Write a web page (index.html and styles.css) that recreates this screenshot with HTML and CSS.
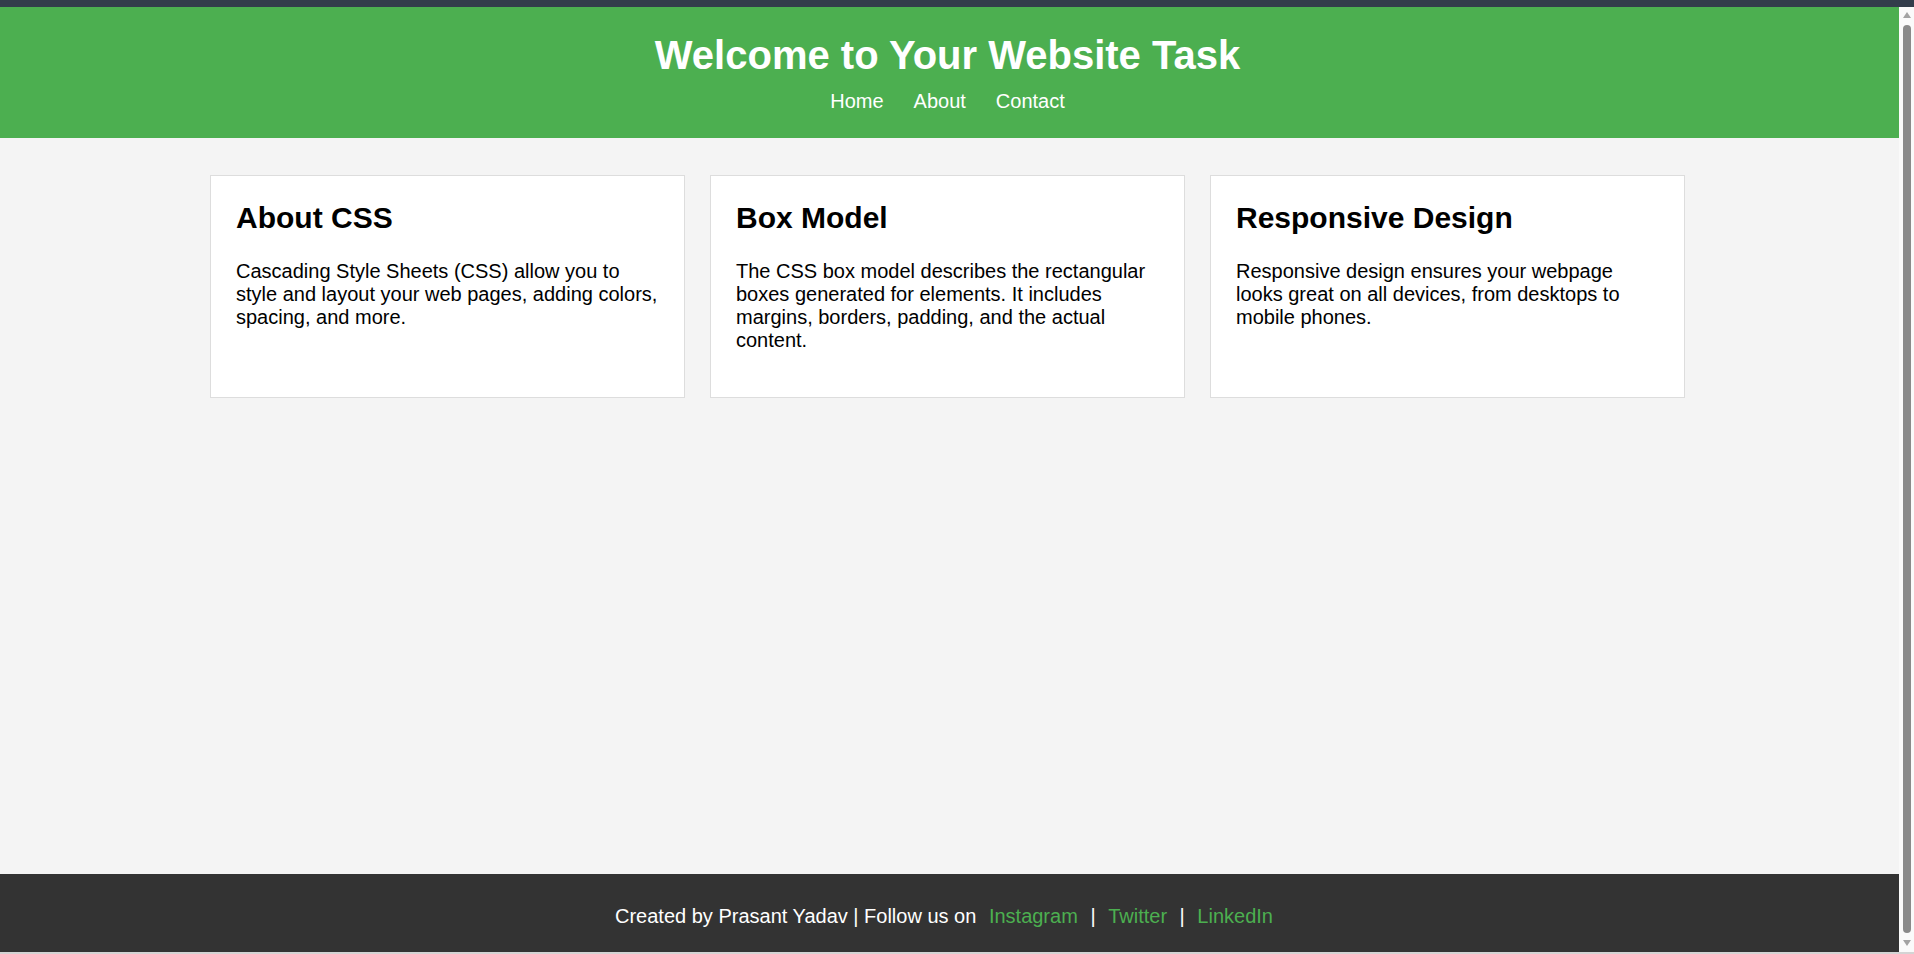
FILE: index.html
```html
<!DOCTYPE html>
<html lang="en">
<head>
<meta charset="UTF-8">
<title>Welcome to Your Website Task</title>
<link rel="stylesheet" href="styles.css">
</head>
<body>
<div class="topbar"></div>
<div class="window">
  <div class="page">
    <header class="site-header">
      <h1 class="site-title">Welcome to Your Website Task</h1>
      <nav class="site-nav">
        <a href="#" class="nav-link">Home</a><a href="#" class="nav-link">About</a><a href="#" class="nav-link">Contact</a>
      </nav>
    </header>
    <main class="main">
      <section class="cards">
        <article class="card">
          <h2 class="card-title">About CSS</h2>
          <p class="card-text">Cascading Style Sheets (CSS) allow you to style and layout your web pages, adding colors, spacing, and more.</p>
        </article>
        <article class="card">
          <h2 class="card-title">Box Model</h2>
          <p class="card-text">The CSS box model describes the rectangular boxes generated for elements. It includes margins, borders, padding, and the actual content.</p>
        </article>
        <article class="card">
          <h2 class="card-title">Responsive Design</h2>
          <p class="card-text">Responsive design ensures your webpage looks great on all devices, from desktops to mobile phones.</p>
        </article>
      </section>
    </main>
    <footer class="site-footer">
      Created by Prasant Yadav | Follow us on <a href="#" class="foot-link">Instagram</a> | <a href="#" class="foot-link">Twitter</a> | <a href="#" class="foot-link">LinkedIn</a>
    </footer>
  </div>
  <div class="scrollbar">
    <svg class="sb-arrow" width="8" height="6" viewBox="0 0 8 6"><polygon points="4,0 8,6 0,6" fill="#a3a3a3"/></svg>
    <div class="sb-thumb"></div>
    <svg class="sb-arrow" width="8" height="6" viewBox="0 0 8 6"><polygon points="0,0 8,0 4,6" fill="#a3a3a3"/></svg>
  </div>
</div>
<div class="bottomline"></div>
</body>
</html>
```

FILE: styles.css
```css
html, body {
  margin: 0;
  padding: 0;
  height: 954px;
  overflow: hidden;
}

body {
  font-family: "Liberation Sans", Arial, sans-serif;
  font-size: 20px;
  background: #f4f4f4;
  color: #000;
  display: flex;
  flex-direction: column;
}

.topbar {
  height: 7px;
  background: #333d4b;
  flex: 0 0 7px;
}

.window {
  flex: 1;
  display: flex;
  min-height: 0;
}

.page {
  flex: 1;
  display: flex;
  flex-direction: column;
  min-width: 0;
}

.site-header {
  background: #4caf50;
  color: #fff;
  text-align: center;
  padding: 26px 4px 25px 0;
}

.site-title {
  margin: 0 0 12px;
  font-size: 40px;
  font-weight: bold;
  line-height: normal;
}

.site-nav {
  font-size: 20px;
}

.nav-link {
  color: #fff;
  text-decoration: none;
  margin: 0 15px;
}

.main {
  flex: 1;
}

.cards {
  display: grid;
  grid-template-columns: repeat(3, 475px);
  gap: 25px;
  margin: 37px 0 0 210px;
}

.card {
  background: #fff;
  border: 1px solid #dddddd;
  padding: 25px;
}

.card-title {
  font-size: 30px;
  font-weight: bold;
  margin: 0 0 25px;
  line-height: normal;
}

.card-text {
  margin: 20px 0;
  font-size: 20px;
  line-height: normal;
}

.site-footer {
  background: #333333;
  color: #fff;
  text-align: center;
  padding: 31px 4px 24px 0;
  font-size: 20px;
  line-height: normal;
}

.foot-link {
  color: #4caf50;
  text-decoration: none;
  margin: 0 7px;
}

.scrollbar {
  width: 15px;
  flex: 0 0 15px;
  background: #fafafa;
  display: flex;
  flex-direction: column;
  align-items: center;
  padding: 5px 0 6px;
  box-sizing: border-box;
  gap: 7px;
}

.sb-arrow {
  display: block;
  flex: 0 0 auto;
}

.sb-thumb {
  flex: 1;
  width: 8px;
  background: #8a8a8a;
  border-radius: 4px;
}

.bottomline {
  height: 2px;
  flex: 0 0 2px;
  background: #d4d4d4;
}
```
